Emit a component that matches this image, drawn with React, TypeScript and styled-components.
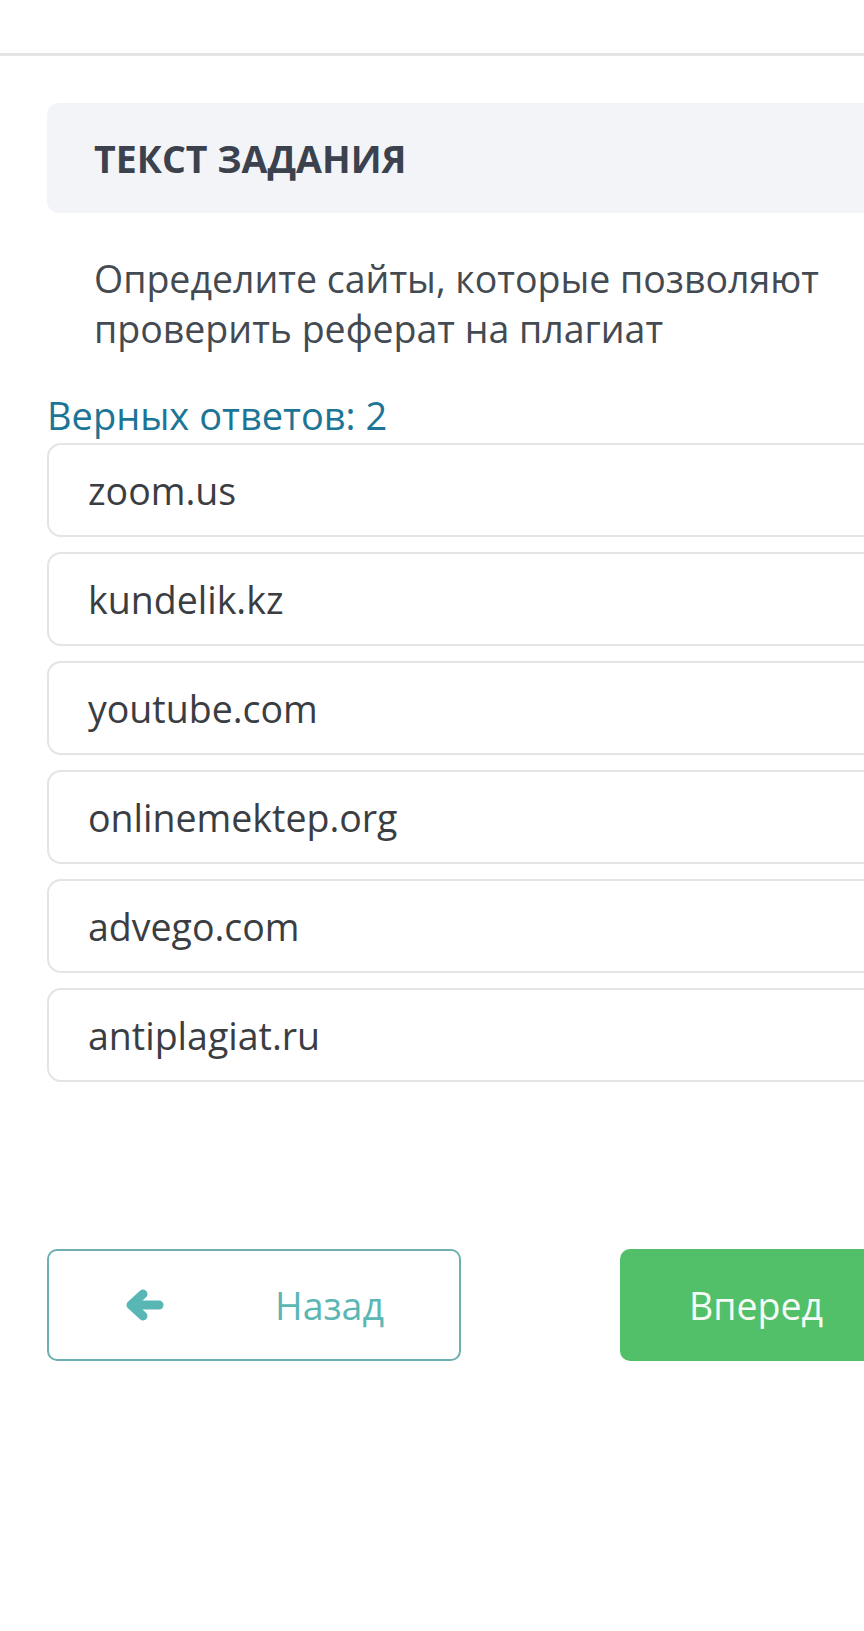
import React from "react";
import styled, { createGlobalStyle } from "styled-components";

const Global = createGlobalStyle`
  html, body {
    margin: 0;
    padding: 0;
    background: #ffffff;
    overflow-x: hidden;
  }
  body {
    font-family: "Open Sans", "Noto Sans", sans-serif;
  }
`;

const Page = styled.div`
  width: 864px;
  min-height: 1631px;
  overflow: hidden;
  background: #ffffff;
`;

const TopBar = styled.header`
  height: 53px;
  border-bottom: 3px solid #e4e4e6;
  background: #ffffff;
`;

const Main = styled.main`
  width: 1000px;
  padding: 47px 0 0 47px;
  display: flex;
  flex-direction: column;
`;

const TaskHeader = styled.div`
  height: 110px;
  box-sizing: border-box;
  background: #f3f4f7;
  border-radius: 12px 0 0 12px;
  display: flex;
  align-items: center;
  padding-left: 47px;
`;

const TaskTitle = styled.h2`
  margin: 0;
  font-size: 37.5px;
  font-weight: 700;
  color: #3b424d;
`;

const Question = styled.p`
  margin: 41px 0 0 0;
  padding-left: 47px;
  font-size: 37.5px;
  line-height: 50px;
  color: #444a52;
  width: 780px;
`;

const Count = styled.div`
  margin-top: 41px;
  font-size: 38px;
  line-height: 40px;
  color: #1c7596;
`;

const Options = styled.div`
  margin-top: 8px;
  display: flex;
  flex-direction: column;
  gap: 15px;
`;

const Option = styled.div`
  height: 94px;
  box-sizing: border-box;
  border: 2px solid #e3e4e6;
  border-right: none;
  border-radius: 14px 0 0 14px;
  display: flex;
  align-items: center;
  padding: 0 0 0 39px;
  font-size: 37.5px;
  color: #3a3d42;
`;

const Nav = styled.div`
  margin-top: 167px;
  display: flex;
  gap: 159px;
`;

const NavButton = styled.button<{ $primary?: boolean }>`
  flex: 0 0 414px;
  width: 414px;
  height: 112px;
  box-sizing: border-box;
  border-radius: 10px;
  font-family: "Open Sans", "Noto Sans", sans-serif;
  font-size: 37.5px;
  display: flex;
  align-items: center;
  padding: 0;
  cursor: pointer;
  background: ${(p) => (p.$primary ? "#52bf69" : "#ffffff")};
  border: ${(p) => (p.$primary ? "none" : "2px solid #6eb0b2")};
  color: ${(p) => (p.$primary ? "#f4fbf5" : "#5bb6b4")};
`;

const BackIcon = styled.svg`
  display: block;
  margin-left: 76px;
  width: 40px;
  height: 32px;
  flex: 0 0 auto;
`;

const BackLabel = styled.span`
  margin-left: 110px;
`;

const NextLabel = styled.span`
  margin-left: 69px;
`;

const sites = [
  "zoom.us",
  "kundelik.kz",
  "youtube.com",
  "onlinemektep.org",
  "advego.com",
  "antiplagiat.ru",
];

export default function App() {
  return (
    <Page>
      <Global />
      <TopBar />
      <Main>
        <TaskHeader>
          <TaskTitle>ТЕКСТ ЗАДАНИЯ</TaskTitle>
        </TaskHeader>
        <Question>Определите сайты, которые позволяют проверить реферат на плагиат</Question>
        <Count>Верных ответов: 2</Count>
        <Options>
          {sites.map((s) => (
            <Option key={s}>{s}</Option>
          ))}
        </Options>
        <Nav>
          <NavButton>
            <BackIcon viewBox="0 0 40 32" aria-hidden="true">
              <g
                fill="none"
                stroke="#58b7b5"
                strokeWidth="9"
                strokeLinecap="round"
                strokeLinejoin="round"
              >
                <path d="M18 5 L6 16 L18 27" />
                <path d="M8 16 H34" />
              </g>
            </BackIcon>
            <BackLabel>Назад</BackLabel>
          </NavButton>
          <NavButton $primary>
            <NextLabel>Вперед</NextLabel>
          </NavButton>
        </Nav>
      </Main>
    </Page>
  );
}
